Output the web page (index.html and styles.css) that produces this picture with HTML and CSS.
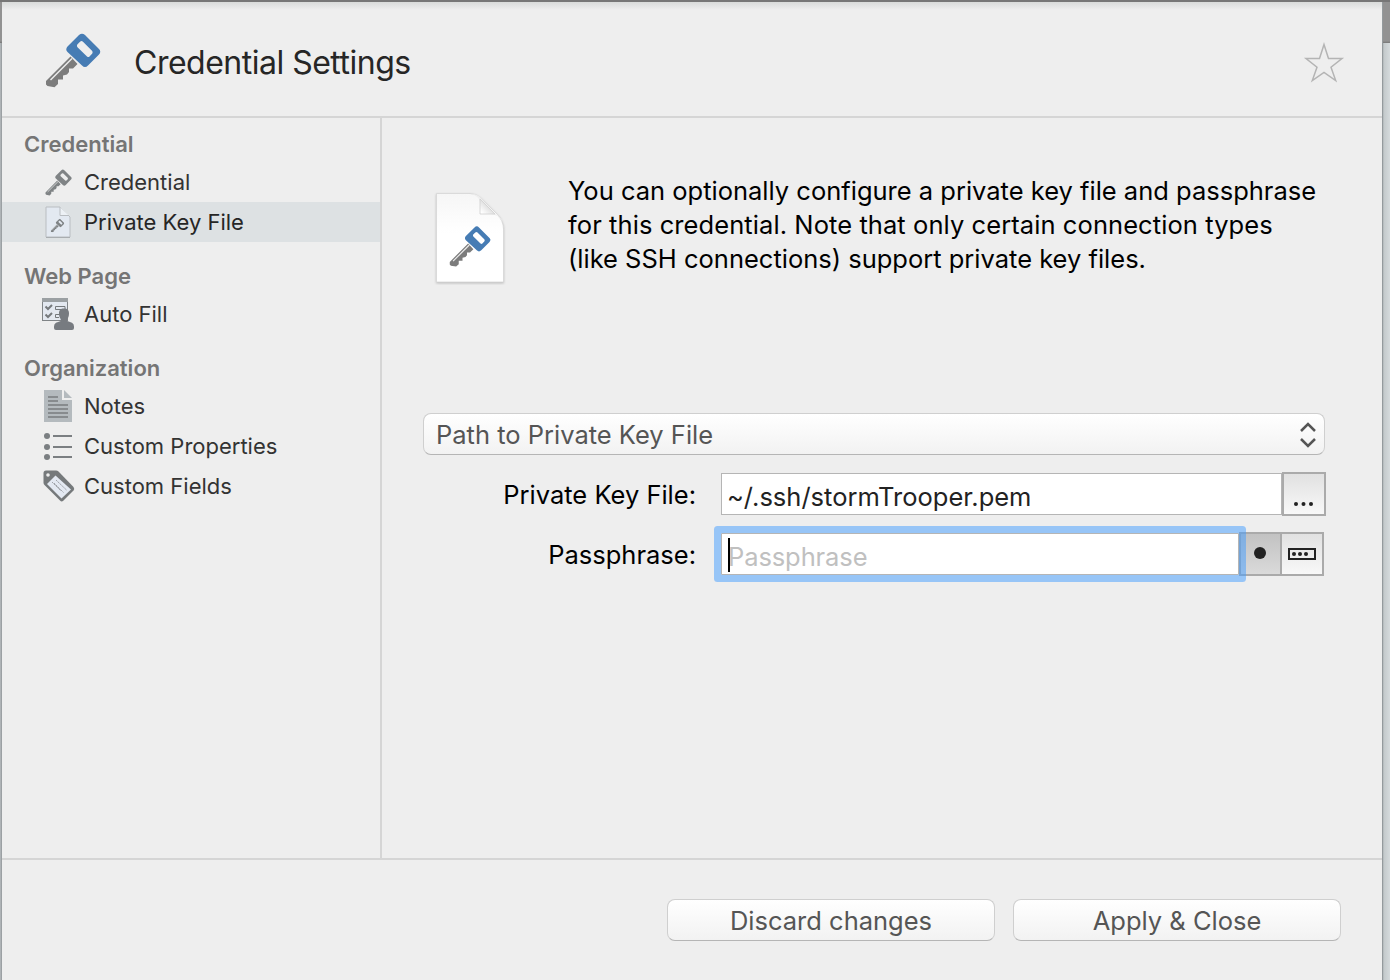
FILE: index.html
```html
<!DOCTYPE html>
<html lang="en">
<head>
<meta charset="utf-8">
<title>Credential Settings</title>
<link rel="stylesheet" href="styles.css">
</head>
<body>
<svg class="defs" width="0" height="0">
  <symbol id="key" viewBox="45 33 56 55">
    <path class="blade" d="M70.5 56.5 L46 81 V84.5 L47.5 86 L54.5 87.3 L58 84 V79.5 H63 V75.5 L67 74.5 L69 72 V68.5 H73 L77.5 64 Z"/>
    <path class="groove" d="M72 58.5 L50.5 80"/>
    <path class="head" fill-rule="evenodd" d="M79 35 Q82 32.3 85 35 L99 49 Q101.5 51.5 99 54.5 L88 65.5 Q85 68.5 82 65.5 L67.500 52 Q65 49.500 67.500 46.500 Z M80 41.700 L77.300 44.500 Q76.500 46 77.500 47.300 L87 56.500 Q88.500 57.500 89.500 56.500 L92.300 53.500 Q93 52 92 50.800 L83 41.700 Q81.500 40.500 80 41.700 Z"/>
  </symbol>
</svg>
<div class="window">
  <header class="header">
    <svg class="key-large blue-key" width="56" height="55"><use href="#key"/></svg>
    <h1 class="title">Credential Settings</h1>
    <svg class="star" width="42" height="42" viewBox="0 0 42 42"><path d="M21 3.500 L25.500 17.500 H39 L28 26.200 L32.700 39.500 L21 31.500 L9.300 39.500 L14 26.200 L3 17.500 H16.500 Z"/></svg>
  </header>
  <div class="body">
    <nav class="sidebar">
      <h2 class="group">Credential</h2>
      <a class="item"><span class="icon"><svg class="gray-key" width="27" height="27"><use href="#key"/></svg></span><span>Credential</span></a>
      <a class="item selected"><span class="icon"><svg width="26" height="33" viewBox="0 0 26 33">
        <path d="M1 1 H15 L25 11 V31 H1 Z" fill="#e3e9f1" stroke="#b9bdc1"/><path d="M15 1 V9.500 H24" fill="#edf1f5" stroke="#b9bdc1"/><path d="M1 31.500H25" stroke="#a9adb0"/>
        <svg class="gray-key" x="5.500" y="12.500" width="14" height="14"><use href="#key"/></svg></svg></span><span>Private Key File</span></a>
      <h2 class="group">Web Page</h2>
      <a class="item"><span class="icon"><svg width="32" height="32" viewBox="0 0 32 32">
        <rect x=".5" y=".5" width="25" height="22" fill="#e3e8f0" stroke="#808487"/><path d="M0 0H26V4H0Z" fill="#9ba0a3"/>
        <path d="M3.500 8.500L6 11L10 7M3.500 16.500L6 19L10 15" fill="none" stroke="#75797c" stroke-width="2"/>
        <path d="M23 11.500V8.500H13.500V11.500H19M18 16.500H13.500V19.500H17" fill="none" stroke="#75797c"/>
        <path d="M22 10.500C18.500 10.500 16.800 12.500 17 15.500C17 18.500 18 20 18.700 21V23L14 24.800Q12 26 12 28.500V30Q12 32 14 32H30Q32 32 32 30V28.500Q32 26 30 24.800L25.300 23V21C26 20 27 18.500 27 15.500C27.200 12.500 25.500 10.500 22 10.500Z" fill="#777b80"/></svg></span><span>Auto Fill</span></a>
      <h2 class="group">Organization</h2>
      <a class="item"><span class="icon"><svg width="28" height="32" viewBox="0 0 28 32">
        <path d="M0 0H18V10H28V32H0Z" fill="#b4babe"/><path d="M20 0L28 8H20Z" fill="#b4babe"/>
        <path d="M4 7H14M4 11H14M4 15H24M4 19H24M4 23H24M4 27H24" stroke="#878b8e" stroke-width="2"/></svg></span><span>Notes</span></a>
      <a class="item"><span class="icon"><svg width="28" height="28" viewBox="0 0 28 28"><g fill="#7b7f82"><circle cx="3" cy="4" r="3"/><circle cx="3" cy="15" r="3"/><circle cx="3" cy="25" r="3"/></g><path d="M9 4H28M9 15H28M9 25H28" stroke="#7b7f82" stroke-width="2"/></svg></span><span class="t-props">Custom Properties</span></a>
      <a class="item"><span class="icon shifted"><svg width="32" height="32" viewBox="0 0 32 32">
        <path d="M3 .5H13Q14.500 .5 15.500 1.500L30.500 17Q32 19 30.500 20.500L20 31Q18.500 32 17 30.500L1.500 15Q.5 14 .5 12.500V3Q.5 .5 3 .5Z" fill="#75797b"/>
        <path d="M12.500 5.500L28 19.500L18.500 28.500L4 14Z" fill="#e3e9f2"/><circle cx="5" cy="5" r="1.800" fill="#eee"/>
        <path d="M13 10L23.500 20M11 13L20.500 22.500M9 12L17.500 20.500" stroke="#a0a4aa" stroke-dasharray="2 .5"/></svg></span><span>Custom Fields</span></a>
    </nav>
    <main class="content">
      <section class="intro">
        <svg class="document blue-key" width="74" height="94" viewBox="433 191 74 94">
          <defs>
            <linearGradient id="paper" x2="0" y2="1"><stop offset="0" stop-color="#f6f6f6"/><stop offset=".45" stop-color="#fff"/></linearGradient>
            <linearGradient id="fold" x1="0" y1="1" x2="1" y2="0"><stop offset=".1" stop-color="#fff"/><stop offset=".5" stop-color="#e2e2e2"/></linearGradient>
          </defs>
          <path class="paper" d="M436.500 193.500H470Q476 193.500 481 198L497 214Q503.500 221 503.500 229V282H436.500Z" fill="url(#paper)" stroke="#d6d6d6" stroke-width=".8"/>
          <path d="M472 194Q480 197 480 203V214H491Q500 215 503 222L481 198Q477 194 472 194Z" fill="#eee"/>
          <path d="M480 199V214H495Z" fill="url(#fold)" stroke="#cfcfcf" stroke-width=".8"/>
          <svg x="449" y="225.500" width="42" height="42"><use href="#key"/></svg>
        </svg>
        <p class="description"><span class="line">You can optionally configure a private key file and passphrase</span><span class="line wide">for this credential. Note that only certain connection types</span><span class="line">(like SSH connections) support private key files.</span></p>
      </section>
      <div class="select"><span>Path to Private Key File</span>
        <svg width="18" height="26" viewBox="0 0 18 26"><path d="M2 9L9 2L16 9M2 17L9 24L16 17"/></svg>
      </div>
      <div class="row">
        <label class="label">Private Key File:</label>
        <div class="field file-field"><span>~/.ssh/stormTrooper.pem</span></div>
        <button class="tool browse"><svg width="22" height="6"><circle cx="3" cy="3" r="2"/><circle cx="10.500" cy="3" r="2"/><circle cx="18" cy="3" r="2"/></svg></button>
      </div>
      <div class="row">
        <label class="label">Passphrase:</label>
        <div class="field pass-field"><span class="caret"></span><span>Passphrase</span></div>
        <button class="tool reveal"><svg width="12" height="12"><circle cx="6" cy="6" r="6"/></svg></button>
        <button class="tool generate"><svg width="28" height="12"><rect x="1" y="1" width="26" height="10" fill="none" stroke="#222" stroke-width="2"/><circle cx="6" cy="6" r="2"/><circle cx="12" cy="6" r="2"/><circle cx="18" cy="6" r="2"/></svg></button>
      </div>
    </main>
  </div>
  <footer class="footer">
    <button class="button">Discard changes</button>
    <button class="button">Apply &amp; Close</button>
  </footer>
</div>
</body>
</html>
```
FILE: styles.css
```css
* { box-sizing: border-box; }
html, body { margin: 0; height: 100%; overflow: hidden; }
body {
  padding: 2px 6px 0 2px;
  font-family: Inter, "Liberation Sans", sans-serif;
  font-size: 25.5px;
  white-space: nowrap;
  background:
    linear-gradient(#777, #777) 0 0 / 100% 2px no-repeat,
    linear-gradient(#929292, #929292 39px, #777 41px) 0 2px / 100% 41px no-repeat,
    linear-gradient(90deg, #b8bdc0 0, #92979a 2px, #92979a 1382px, #c4cacc 1384px, #d5dadc 1390px);
}
svg { display: block; flex: none; }
.defs { position: absolute; }
.window {
  display: flex;
  flex-direction: column;
  width: 1380px;
  height: 978px;
  background: linear-gradient(#d9dbda, #eee 8px);
  box-shadow: 1px 0 0 #949a9d;
}
.header {
  display: flex;
  align-items: center;
  height: 116px;
  padding: 0 37px 0 43px;
  border-bottom: 2px solid #d5d5d5;
}
.key-large { margin-top: 3px; }
.title {
  margin: 6px auto 0 33px;
  font-size: 32px;
  font-weight: 400;
  letter-spacing: -.5px;
  color: #262626;
}
.star { margin-top: 5px; fill: none; stroke: #b4b4b4; stroke-width: 1.5; }
.blue-key { --head: #467cb4; --blade: #7c7c7c; }
.gray-key { --head: #7f8385; --blade: #7f8385; }
.head { fill: var(--head); }
.blade { fill: var(--blade); }
.groove { fill: none; stroke: #eee; stroke-width: 1.5; }
.body { display: flex; height: 740px; }
.sidebar {
  width: 380px;
  flex: none;
  padding-top: 8px;
  border-right: 2px solid #d5d5d5;
}
.group {
  height: 36px;
  margin: 0 0 0 22px;
  font-size: 22px;
  font-weight: 560;
  line-height: 36px;
  color: #757575;
}
.item + .group { margin-top: 16px; }
.item {
  display: flex;
  align-items: center;
  height: 40px;
  padding-left: 40px;
  font-size: 22px;
  font-weight: 430;
  color: #333;
}
.selected { background: #dde1e3; color: #262626; }
.icon { display: flex; justify-content: center; width: 32px; margin-right: 10px; }
.shifted { margin-left: 1px; margin-right: 9px; }
.content { width: 1000px; padding: 56px 55px 0 41px; }
.intro { display: flex; height: 239px; }
.document { margin: 17px 61px 0 10px; }
.paper { filter: drop-shadow(0 1px 1px #bbb); }
.description { margin: 0; line-height: 34px; color: #000; }
.line { display: block; width: max-content; }
.wide { letter-spacing: .08px; }
.select, .button {
  border: 1px solid #cfcfcf;
  border-bottom-color: #b5b5b5;
  border-radius: 8px;
  background: linear-gradient(#fff, #f2f2f2);
  color: #555;
}
.select {
  display: flex;
  align-items: center;
  justify-content: space-between;
  width: 902px;
  height: 42px;
  padding: 1px 7px 0 12px;
}
.select path { fill: none; stroke: #555; stroke-width: 2.5; }
.row { display: flex; height: 44px; margin-top: 17px; }
.row + .row { margin-top: 16px; }
.label { width: 273px; margin-right: 25px; padding-top: 1px; text-align: right; line-height: 44px; }
.field {
  display: flex;
  align-items: center;
  height: 42px;
  margin-top: 1px;
  padding: 5px 0 0 5px;
  border: 1px solid #b5b5b5;
  background: #fff;
  color: #222;
}
.file-field { width: 561px; }
.pass-field {
  position: relative;
  width: 518px;
  padding-left: 6px;
  letter-spacing: -.1px;
  color: #c0c0c0;
  box-shadow: 0 0 0 7px rgba(64, 156, 255, .5);
  border-radius: 1px;
  z-index: 1;
}
.caret { position: absolute; left: 6px; top: 4px; width: 2px; height: 34px; background: #000; }
.tool {
  display: flex;
  align-items: center;
  justify-content: center;
  height: 44px;
  width: 44px;
  padding: 0;
  border: 2px solid #aaa;
  background: linear-gradient(#e1e1e1, #f8f8f8);
  fill: #222;
}
.browse { padding-top: 19px; }
.reveal { border-right: 0; background: linear-gradient(#c2c2c2, #dadada); width: 41px; padding: 0 2px 2px 0; }
.footer {
  display: flex;
  justify-content: flex-end;
  gap: 18px;
  height: 122px;
  padding: 39px 41px 0 0;
  border-top: 2px solid #d5d5d5;
}
.button { width: 328px; height: 42px; padding: 1px 0 0; font: inherit; }
```
